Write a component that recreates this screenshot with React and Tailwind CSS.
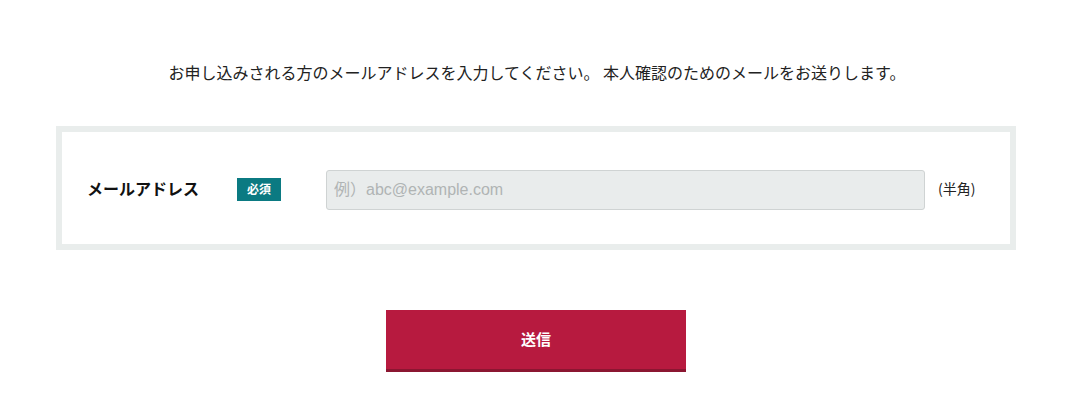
export default function App() {
  return (
    <div
      className="bg-white w-[1074px] h-[407px] text-[#222]"
      style={{ fontFamily: '"Noto Sans CJK JP", "Noto Sans", sans-serif' }}
    >
      <p className="pt-[59px] text-center text-[16px] leading-[26px]">
        お申し込みされる方のメールアドレスを入力してください。 本人確認のためのメールをお送りします。
      </p>

      {/* Form box */}
      <div className="mt-[41px] ml-[56px] w-[960px] h-[124px] border-[6px] border-[#e9edec] flex items-center">
        <div className="w-[150px] pl-[25px] font-bold text-[16px] text-[#111]">メールアドレス</div>
        <div className="w-[114px] pl-[25px]">
          <span className="inline-flex items-center justify-center w-[44px] h-[23px] bg-[#0b7a82] text-white text-[12px] font-bold leading-none">
            必須
          </span>
        </div>
        <input
          type="text"
          placeholder="例）abc@example.com"
          className="mt-[4px] w-[599px] h-[40px] bg-[#e9ecec] border border-[#cfd3d3] rounded-[3px] px-[7px] text-[16px] placeholder:text-[#b0b4b4] outline-none"
          style={{ fontFamily: '"Liberation Sans", "Noto Sans CJK JP", sans-serif' }}
        />
        <span className="ml-[13px] text-[14px] text-[#222]">(半角)</span>
      </div>

      <div className="flex justify-center mt-[60px] pr-[2px]">
        <button className="w-[300px] h-[62px] bg-[#b71a3f] border-b-[3px] border-[#8b1631] text-white font-bold text-[15px]">
          送信
        </button>
      </div>
    </div>
  )
}
